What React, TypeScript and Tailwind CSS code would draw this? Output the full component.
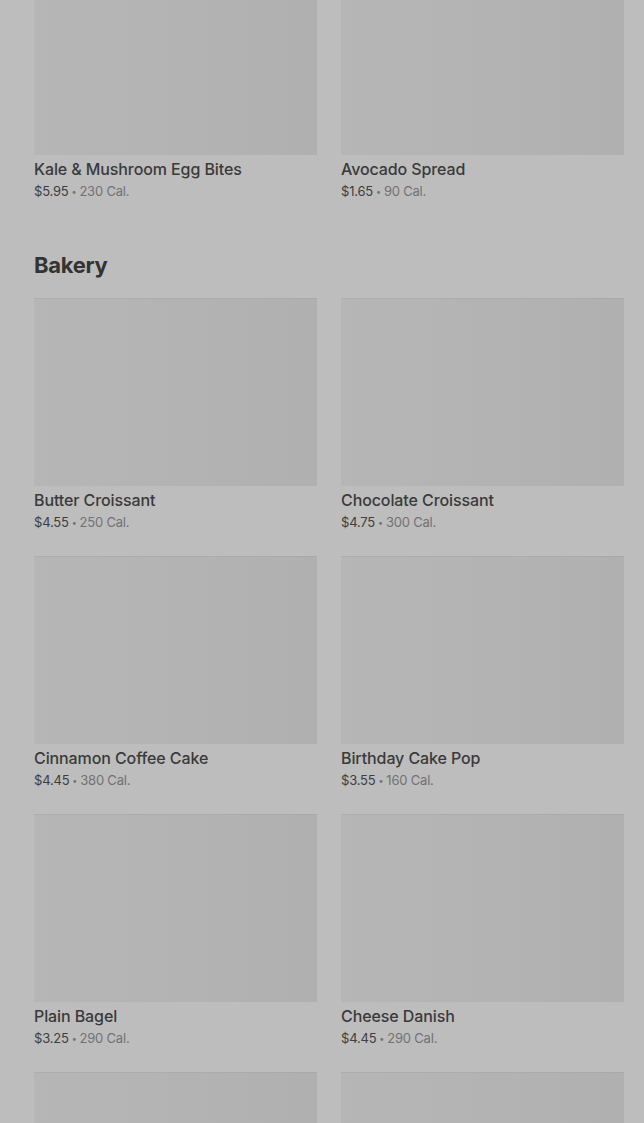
const top = [
  { name: "Kale & Mushroom Egg Bites", price: "$5.95", cal: "230 Cal." },
  { name: "Avocado Spread", price: "$1.65", cal: "90 Cal." },
];

const bakery = [
  { name: "Butter Croissant", price: "$4.55", cal: "250 Cal." },
  { name: "Chocolate Croissant", price: "$4.75", cal: "300 Cal." },
  { name: "Cinnamon Coffee Cake", price: "$4.45", cal: "380 Cal." },
  { name: "Birthday Cake Pop", price: "$3.55", cal: "160 Cal." },
  { name: "Plain Bagel", price: "$3.25", cal: "290 Cal." },
  { name: "Cheese Danish", price: "$4.45", cal: "290 Cal." },
];

type Item = { name: string; price: string; cal: string };

function Thumb() {
  return (
    <div className="h-[188px] w-full bg-gradient-to-r from-[#b6b6b6] via-[#b3b3b3] to-[#b0b0b0] shadow-[inset_0_1px_0_rgba(0,0,0,0.04)]" />
  );
}

function ItemCard({ item }: { item: Item }) {
  return (
    <div className="flex flex-col">
      <Thumb />
      <p className="mt-[4px] h-5 text-[16px] font-medium leading-5 tracking-[-0.1px] text-[#3a3a3a]">{item.name}</p>
      <p className="mt-[3px] flex h-[18px] items-center text-[13px] leading-[18px] tracking-[-0.2px] text-[#727272]">
        <span className="text-[#3e3e3e]">{item.price}</span>
        <span className="mx-[3px] text-[9px] leading-none">•</span>
        <span>{item.cal}</span>
      </p>
    </div>
  );
}

export default function App() {
  return (
    <div
      className="h-[1123px] overflow-hidden bg-[#bdbdbd] pl-[34px] pr-[20px]"
      style={{ fontFamily: "Inter, 'Noto Sans', sans-serif" }}
    >
      <div className="-mt-[33px] grid grid-cols-2 gap-x-[24px] gap-y-[25px]">
        {top.map((item) => (
          <ItemCard key={item.name} item={item} />
        ))}
      </div>
      <h2 className="mt-[51px] h-7 text-[22px] font-bold leading-7 tracking-[-0.3px] text-[#333333]">Bakery</h2>
      <div className="mt-[19px] grid grid-cols-2 gap-x-[24px] gap-y-[25px]">
        {bakery.map((item) => (
          <ItemCard key={item.name} item={item} />
        ))}
        <Thumb />
        <Thumb />
      </div>
    </div>
  );
}
